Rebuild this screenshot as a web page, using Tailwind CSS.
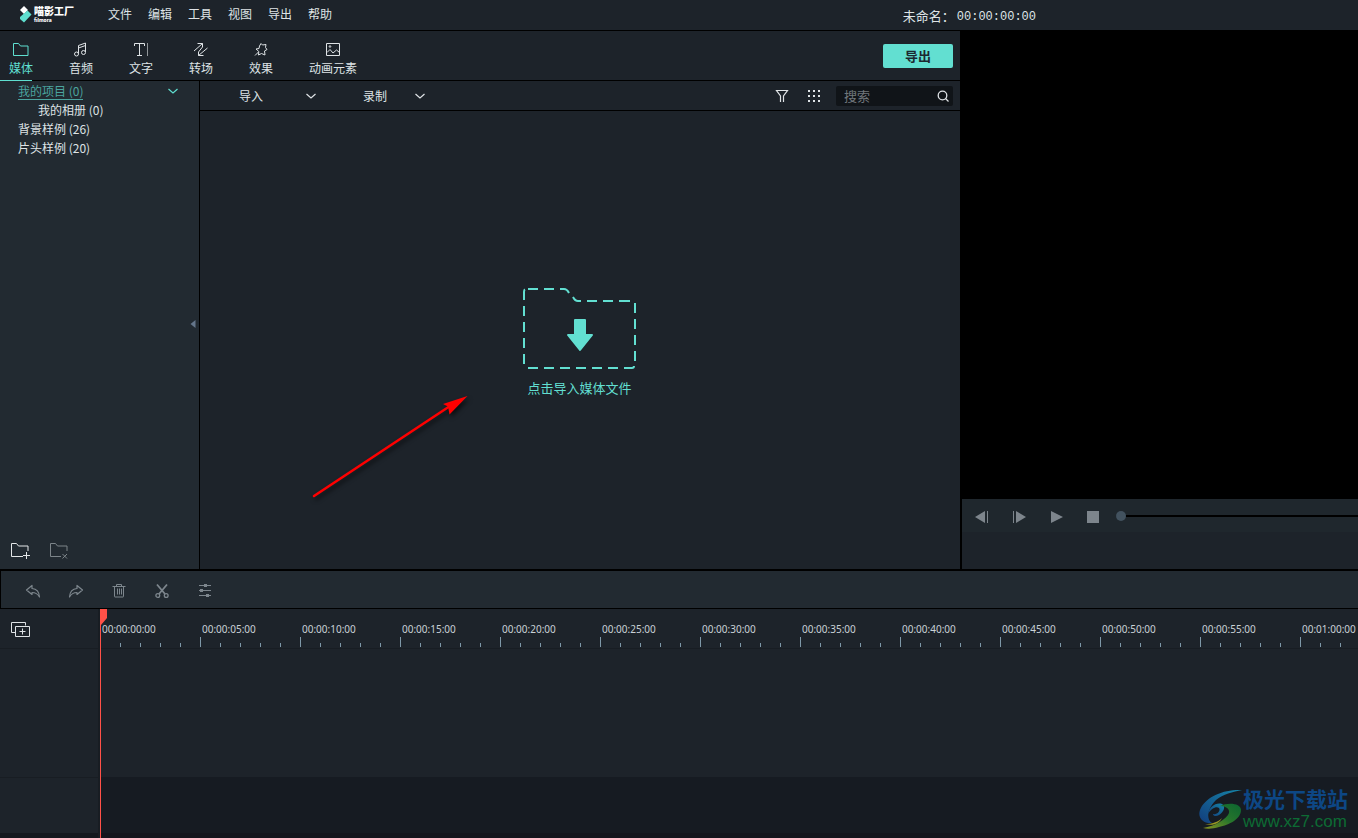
<!DOCTYPE html>
<html lang="zh-CN">
<head>
<meta charset="utf-8">
<title>喵影工厂</title>
<script src="https://cdn.jsdelivr.net/npm/@tailwindcss/browser@4"></script>
</head>
<body class="relative flex h-screen flex-col overflow-hidden bg-[#1d232a] font-['Noto_Sans_CJK_SC',sans-serif] text-xs text-[#dfe3e6]">

<header class="flex h-[31px] shrink-0 items-center border-b border-black pb-0.5">
  <div class="flex w-[108px] items-start gap-0.5 pl-[18px]">
    <svg class="h-[19px] w-[14px]" viewBox="0 0 14 19" aria-hidden="true">
      <path d="M6 1l4 4-4 4-4-4z" fill="#fff"/>
      <path d="M9.500 5.500l4 4L6 17.500 2 14v-2z" fill="#5fdfd0"/>
    </svg>
    <div class="text-white">
      <div class="text-[10px] leading-[11px] font-black">喵影工厂</div>
      <div class="font-['Inter',sans-serif] text-[5px] leading-[8px] font-extrabold">filmora</div>
    </div>
  </div>
  <nav class="flex gap-4 leading-5">
    <a href="#">文件</a><a href="#">编辑</a><a href="#">工具</a><a href="#">视图</a><a href="#">导出</a><a href="#">帮助</a>
  </nav>
  <div class="mr-[322px] ml-auto flex items-center pt-1 text-[13px] leading-5"><span>未命名：</span><span class="pt-px pl-0.5 font-['Liberation_Mono',monospace] text-xs leading-5">00:00:00:00</span></div>
</header>

<main class="flex min-h-0 flex-1 border-b-2 border-black">
  <section class="flex w-[962px] shrink-0 flex-col border-r-2 border-black">
    <div class="flex h-[50px] shrink-0 items-start justify-between border-b border-black pr-[7px]">
      <nav class="flex h-[50px] gap-9 pl-[9px] leading-5">
        <button class="relative flex flex-col items-center pt-2.5 text-[#5fdfd0] after:absolute after:-left-[9px] after:bottom-0 after:h-px after:w-8 after:bg-[#5fdfd0]">
          <svg class="h-[17px] w-[18px]" viewBox="0 0 18 17" fill="none" stroke="currentColor"><path d="M1.500 2.500h5l2 2.500h7.500v9.500H1.500z"/></svg>媒体</button>
        <button class="flex flex-col items-center pt-2.5">
          <svg class="h-[17px] w-4" viewBox="0 0 16 17" fill="none" stroke="currentColor"><path d="M5.500 12.500V4.500l7-2.500v9M5.500 7l7-2.500"/><circle cx="3.500" cy="13" r="2"/><circle cx="10.500" cy="11.500" r="2"/></svg>音频</button>
        <button class="flex flex-col items-center pt-2.5">
          <svg class="h-[17px] w-4" viewBox="0 0 16 17" fill="none" stroke="currentColor"><path d="M1.500 5V2.500h10V5M6.500 2.500v12M4 14.500h5"/><path d="M14.500 2v13" opacity=".6"/></svg>文字</button>
        <button class="flex flex-col items-center pt-2.5">
          <svg class="h-[17px] w-4" viewBox="0 0 16 17" fill="none" stroke="currentColor"><path d="M1 10L9.500 2.500M4.500 2.500h5V6L5.500 11v3.500h5M5.500 14.500L14.500 7"/></svg>转场</button>
        <button class="flex flex-col items-center pt-2.5">
          <svg class="h-[17px] w-4" viewBox="0 0 16 17" fill="none" stroke="currentColor"><path d="M6.500 5L8 2.500 9.500 4l3.500-.500-.500 3 1.500 2-2.500 1.500.500 4-3.500-1.500L5.500 14l.300-3.500L3 8l3-.500zM5.500 11L2 14.500"/></svg>效果</button>
        <button class="flex flex-col items-center pt-2.5">
          <svg class="h-[17px] w-4" viewBox="0 0 16 17" fill="none" stroke="currentColor"><path d="M1.500 2.500h13v12h-13zM2 11.500l3-3 3 3.500 3.500-3 3 2.500"/><circle cx="5" cy="5.500" r=".8"/></svg>动画元素</button>
      </nav>
      <button class="mt-[13px] h-6 w-[70px] rounded-xs bg-[#62dfd1] text-[13px] leading-6 font-bold text-[#1c2830]">导出</button>
    </div>

    <div class="flex min-h-0 flex-1">
      <aside class="flex w-[200px] shrink-0 flex-col border-r border-black bg-[#222a31]">
        <ul class="pl-[18px] leading-[19px]">
          <li class="flex h-[19px] items-start justify-between pr-5 text-[#4ba49f]"><a href="#" class="h-[19px] border-b border-[#4ba49f]">我的项目 (0)</a>
            <svg class="mt-1.5 h-2 w-3" viewBox="0 0 12 8" fill="none" stroke="#5fdfd0" stroke-width="1.200"><path d="M1.500 2L6 6l4.500-4"/></svg></li>
          <li class="h-[19px] pl-5"><a href="#">我的相册 (0)</a></li>
          <li class="h-[19px]"><a href="#">背景样例 (26)</a></li>
          <li class="h-[19px]"><a href="#">片头样例 (20)</a></li>
        </ul>
        <button class="mt-[161px] flex h-3 justify-end pr-[3px]" aria-label="收起">
          <svg class="h-3 w-[6px]" viewBox="0 0 6 12"><path d="M5.500 2v8L.500 6z" fill="#64758a"/></svg></button>
        <div class="mt-auto flex gap-[18px] pb-[9px] pl-[10px]">
          <button aria-label="新建文件夹"><svg class="h-[18px] w-[21px]" viewBox="0 0 21 18" fill="none" stroke="#e3e6e8"><path d="M13 14.500H1.500v-13h5l2 2.500h9.500v5M16.500 10v7M13 13.500h7"/></svg></button>
          <button aria-label="删除文件夹"><svg class="h-[18px] w-[21px]" viewBox="0 0 21 18" fill="none" stroke="#7c8489"><path d="M12 14.500H1.500v-13h5l2 2.500h9.500v5M13.500 12l4.500 4.500M18 12l-4.500 4.500"/></svg></button>
        </div>
      </aside>

      <div class="flex min-w-0 flex-1 flex-col">
        <div class="flex h-[30px] shrink-0 items-center border-b border-black pr-[7px] pl-[39px] leading-5">
          <button class="flex w-[124px] items-center"><span>导入</span>
            <svg class="ml-[42px] h-2 w-3" viewBox="0 0 12 8" fill="none" stroke="currentColor" stroke-width="1.200"><path d="M1.500 2L6 6l4.500-4"/></svg></button>
          <button class="flex items-center"><span>录制</span>
            <svg class="ml-[27px] h-2 w-3" viewBox="0 0 12 8" fill="none" stroke="currentColor" stroke-width="1.200"><path d="M1.500 2L6 6l4.500-4"/></svg></button>
          <button class="ml-auto" aria-label="筛选"><svg class="h-4 w-4" viewBox="0 0 16 16" fill="none" stroke="currentColor" stroke-width="1.200"><path d="M6.500 14V8L2.500 2.500h11L9.500 8v6"/></svg></button>
          <button class="ml-4" aria-label="网格视图"><svg class="h-4 w-4" viewBox="0 0 16 16" fill="currentColor"><path d="M2 2h2v2H2zM7 2h2v2H7zM12 2h2v2h-2zM2 7h2v2H2zM7 7h2v2H7zM12 7h2v2h-2zM2 12h2v2H2zM7 12h2v2H7zM12 12h2v2h-2z"/></svg></button>
          <label class="ml-3.5 flex h-5 w-[117px] items-center rounded-xs bg-[#101418] pr-1 pl-2">
            <input type="text" placeholder="搜索" aria-label="搜索" class="min-w-0 flex-1 bg-transparent text-[13px] leading-5 outline-none placeholder:text-[#70777c]">
            <svg class="h-3 w-3" viewBox="0 0 12 12" fill="none" stroke="currentColor" stroke-width="1.300"><circle cx="5.500" cy="5.500" r="4.300"/><path d="M8.500 8.500L11.500 11.500"/></svg>
          </label>
        </div>
        <div class="flex flex-1 items-center justify-center pt-1 pr-px">
          <button class="flex flex-col items-center gap-[7px] text-[13px] leading-5 text-[#62dfd1]">
            <svg class="h-[84px] w-[116px]" viewBox="522 287 116 84" fill="none" stroke="currentColor" stroke-width="2">
              <path d="M528 289h10M544 289h10M560 289h4q3 0 5 4M573 297q2 4 5 4h3M587 301h10M603 301h10M619 301h11M635 303v10M635 319v10M635 335v10M635 351v10M634 366q0 2-2 2h-8M528 368h10M544 368h10M560 368h10M576 368h10M592 368h10M608 368h10M524 300v-8q0-2 1-2.500M524 306v10M524 322v10M524 338v10M524 354v10"/>
              <path d="M575 320h10v15h7l-12 15-12-15h7z" fill="currentColor" stroke-linejoin="round"/>
            </svg>
            点击导入媒体文件</button>
        </div>
      </div>
    </div>
  </section>

  <section class="flex min-w-0 flex-1 flex-col">
    <div class="flex-1 bg-black"></div>
    <div class="flex h-[33px] shrink-0 items-center bg-[#1f272d] pt-[3px] pl-3 text-[#7d858c]">
      <button class="w-[38px]" aria-label="上一帧"><svg class="h-[14px] w-4" viewBox="0 0 16 14" fill="currentColor"><path d="M11 1v12L1 7zM13 1h1v12h-1z"/></svg></button>
      <button class="w-[38px]" aria-label="下一帧"><svg class="h-[14px] w-4" viewBox="0 0 16 14" fill="currentColor"><path d="M4 1v12l10-6zM1 1h1v12H1z"/></svg></button>
      <button class="w-9" aria-label="播放"><svg class="h-[14px] w-4" viewBox="0 0 16 14" fill="currentColor"><path d="M1 1v12l12-6z"/></svg></button>
      <button class="w-[30px]" aria-label="停止"><svg class="h-[14px] w-4" viewBox="0 0 16 14" fill="currentColor"><path d="M1 1h12v12H1z"/></svg></button>
      <input type="range" min="0" max="100" value="0" aria-label="播放进度" class="mb-0.5 h-2.5 min-w-0 flex-1 appearance-none bg-transparent [&::-webkit-slider-runnable-track]:h-0.5 [&::-webkit-slider-runnable-track]:bg-black [&::-webkit-slider-thumb]:-mt-1 [&::-webkit-slider-thumb]:h-2.5 [&::-webkit-slider-thumb]:w-2.5 [&::-webkit-slider-thumb]:appearance-none [&::-webkit-slider-thumb]:rounded-full [&::-webkit-slider-thumb]:bg-[#42525f]">
    </div>
    <div class="h-[37px] shrink-0"></div>
  </section>
</main>

<div class="flex h-[38px] shrink-0 items-center gap-[27px] border-b border-l border-black bg-[#222a31] pt-0.5 pl-6 text-[#7d868d]">
  <button aria-label="撤销"><svg class="h-4 w-4" viewBox="0 0 16 16" fill="none" stroke="currentColor" stroke-width="1.200"><path d="M1.500 7L7 2.500V5.500q7 .500 7.500 8.500Q12 9.500 7 9.500V11.500z" stroke-linejoin="round"/></svg></button>
  <button aria-label="重做"><svg class="h-4 w-4" viewBox="0 0 16 16" fill="none" stroke="currentColor" stroke-width="1.200"><path d="M14.500 7L9 2.500V5.500Q2 6 1.500 14 4 9.500 9 9.500V11.500z" stroke-linejoin="round"/></svg></button>
  <button aria-label="删除"><svg class="h-4 w-4" viewBox="0 0 16 16" fill="none" stroke="currentColor"><path d="M1.500 3.500h13M5.500 3V1.500h5V3M3.500 4v9.500q0 .500.500.500h8q.500 0 .500-.500V4M6.500 5.500v6M8.500 5.500v6M10.500 5.500v6"/></svg></button>
  <button aria-label="剪切"><svg class="h-4 w-4" viewBox="0 0 16 16" fill="none" stroke="currentColor" stroke-width="1.300"><path d="M3 1.500l8 9.500M13 1.500L5 11" stroke-width="1.800"/><circle cx="3.800" cy="12.500" r="1.900"/><circle cx="12.200" cy="12.500" r="1.900"/></svg></button>
  <button aria-label="调节"><svg class="h-4 w-4" viewBox="0 0 16 16" fill="none" stroke="currentColor"><path d="M2 2.500h12M2 7.500h12M2 12.500h12"/><path d="M7 1h3v3H7zM3 6h3v3H3zM9 11h3v3H9z" fill="currentColor" stroke="none"/></svg></button>
</div>

<section class="relative flex h-[229px] shrink-0">
  <div class="flex w-[100px] shrink-0 flex-col border-r-2 border-[#181d23]">
    <div class="flex h-10 shrink-0 items-center border-b border-[#181d23] pt-0.5 pl-2.5">
      <button aria-label="添加轨道"><svg class="h-[17px] w-5" viewBox="0 0 20 17" fill="none" stroke="#dfe3e6"><path d="M5.500 11.500h-4v-10h14v3M5.500 5.500h14v10h-14zM12.500 7.500v6M9.500 10.500h6"/></svg></button>
    </div>
    <div class="h-[129px] border-b border-[#181d23]"></div>
    <div class="flex-1"></div>
    <div class="h-[5px] bg-[#14181e]"></div>
  </div>
  <div class="flex min-w-0 flex-1 flex-col">
    <div id="ruler" class="flex h-10 shrink-0 overflow-hidden border-b border-[#181d23] pb-px"></div>
    <div class="h-32"></div>
    <div class="flex-1 bg-[#161b22]"></div>
    <div class="h-[5px] bg-[#14161d]"></div>
  </div>
  <svg class="absolute top-0 left-[100px] h-full w-2" aria-hidden="true"><path d="M0 0h7v9l-6 7v213H0z" fill="#ff5148"/></svg>
</section>

<svg class="pointer-events-none absolute top-[390px] left-[308px] h-[112px] w-[166px] drop-shadow-[2px_3px_2px_rgba(0,0,0,0.6)]" viewBox="308 390 166 112" aria-hidden="true">
  <path d="M314 496L450 406" stroke="#f00" stroke-width="2.500" stroke-linecap="round"/>
  <path d="M467.500 396L443 404l5 2.500 1.500 8z" fill="#f00"/>
</svg>

<div class="absolute right-2.5 bottom-1.5 flex items-end">
  <svg class="h-[42px] w-[44px]" viewBox="0 0 44 42" aria-hidden="true">
    <defs>
      <linearGradient id="wb" x1="0" y1="1" x2="1" y2="0"><stop offset="0" stop-color="#123d7c"/><stop offset="1" stop-color="#1685a8"/></linearGradient>
      <linearGradient id="wg" x1="0" y1="1" x2="1" y2="0"><stop offset="0" stop-color="#8b9420"/><stop offset=".5" stop-color="#28762c"/><stop offset="1" stop-color="#0b6530"/></linearGradient>
    </defs>
    <path d="M43 0C25-1 6 7 1 20c-3 8 4 14 12 13C7 29 8 19 17 10 24 4 34 2 43 0z" fill="url(#wb)"/>
    <path d="M9 24c1-7 8-12 14-10 4 2 2 8-3 11-3 2-6 1-6-1 4 1 8-3 6-6-3-2-8 1-11 6z" fill="url(#wb)"/>
    <path d="M21 16c8-4 21-3 21 4 0 9-12 15-22 17-6 2-12 2-16 1 12-2 24-9 26-15 1-4-3-7-9-7z" fill="url(#wg)"/>
    <path d="M6 34c7 0 13-2 17-6-3 6-9 8-17 6z" fill="#9a9a24"/>
  </svg>
  <div class="flex flex-col gap-0.5">
    <div class="text-[21px] leading-6 font-bold text-[#0d4785]">极光下载站</div>
    <div class="font-['Liberation_Sans',sans-serif] text-[17px] leading-5 text-[#0d6b34]">www.xz7.com</div>
  </div>
</div>

<script>
  const ruler = document.getElementById('ruler');
  const pad = n => String(n).padStart(2, '0');
  for (let i = 0; i <= 12; i++) {
    const s = i * 5;
    ruler.insertAdjacentHTML('beforeend', `
      <div class="flex w-[100px] shrink-0 flex-col justify-between pt-[13px]">
        <span class="pl-0.5 font-['Noto_Sans',sans-serif] text-[10px] leading-3.5 text-[#c9d1d6]">00:${pad(Math.floor(s / 60))}:${pad(s % 60)}:00</span>
        <div class="flex items-end gap-[19px]">
          <i class="h-2.5 w-px bg-[#7e98a8]"></i><i class="h-1 w-px bg-[#7e98a8]"></i><i class="h-1 w-px bg-[#7e98a8]"></i><i class="h-1 w-px bg-[#7e98a8]"></i><i class="h-1 w-px bg-[#7e98a8]"></i>
        </div>
      </div>`);
  }
</script>
</body>
</html>
